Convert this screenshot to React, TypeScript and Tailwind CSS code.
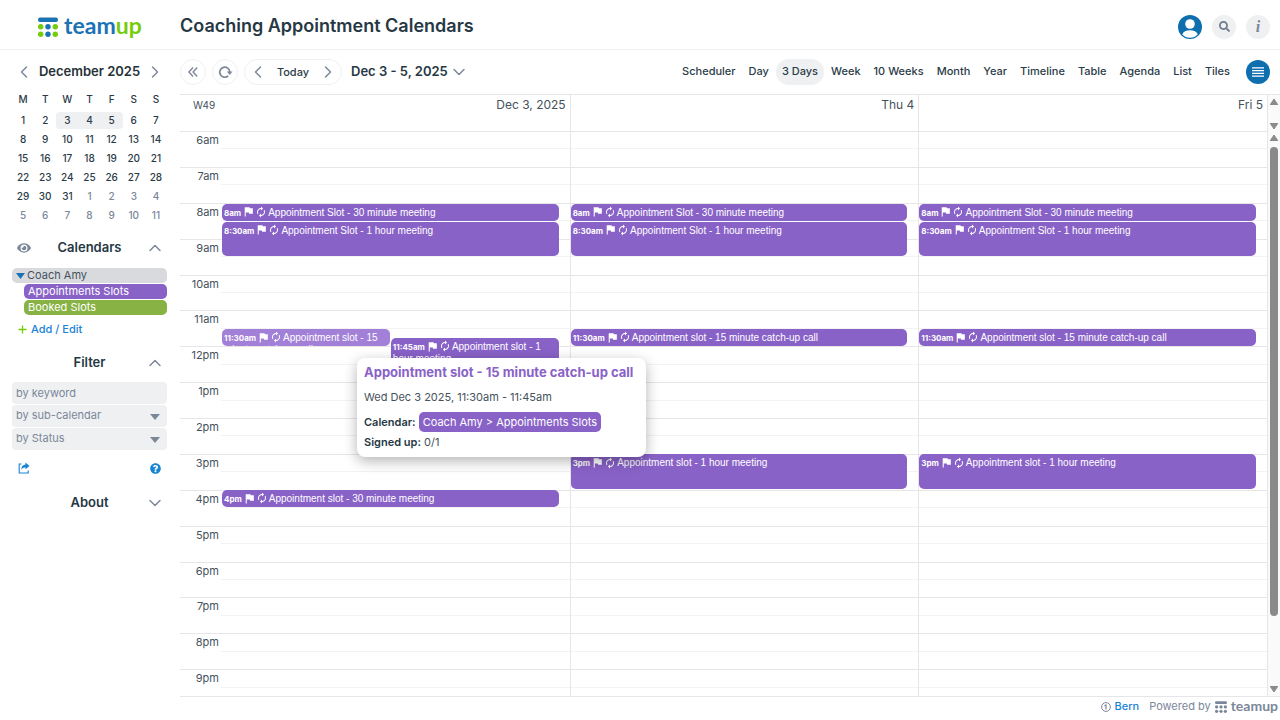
import type { CSSProperties, ReactNode } from "react"
import { clsx } from "clsx"
import { ChevronDown, ChevronLeft, ChevronRight, ChevronUp } from "lucide-react"
import { FaEye, FaQuestionCircle, FaSearch } from "react-icons/fa"
import { MdAutorenew, MdFlag } from "react-icons/md"

const FIRST_HOUR = 6
const HOURS = Array.from({ length: 16 }, (_, i) => FIRST_HOUR + i)

const VIEWS = [
  "Scheduler",
  "Day",
  "3 Days",
  "Week",
  "10 Weeks",
  "Month",
  "Year",
  "Timeline",
  "Table",
  "Agenda",
  "List",
  "Tiles",
]

const WEEKDAYS = ["M", "T", "W", "T", "F", "S", "S"]

interface CalendarEvent {
  time: string
  title: string
  start: number
  /** length in quarter hours, never less than two so that the title fits */
  quarters: number
  lane?: "left" | "right"
  active?: boolean
}

interface Day {
  label: string
  events: CalendarEvent[]
}

const morning: CalendarEvent[] = [
  { time: "8am", title: "Appointment Slot - 30 minute meeting", start: 8, quarters: 2 },
  { time: "8:30am", title: "Appointment Slot - 1 hour meeting", start: 8.5, quarters: 4 },
]

const laterDay: CalendarEvent[] = [
  ...morning,
  { time: "11:30am", title: "Appointment slot - 15 minute catch-up call", start: 11.5, quarters: 2 },
  { time: "3pm", title: "Appointment slot - 1 hour meeting", start: 15, quarters: 4 },
]

const DAYS: Day[] = [
  {
    label: "Dec 3, 2025",
    events: [
      ...morning,
      { time: "11:30am", title: "Appointment slot - 15 minute catch-up call", start: 11.5, quarters: 2, lane: "left", active: true },
      { time: "11:45am", title: "Appointment slot - 1 hour meeting", start: 11.75, quarters: 4, lane: "right" },
      { time: "4pm", title: "Appointment slot - 30 minute meeting", start: 16, quarters: 2 },
    ],
  },
  { label: "Thu 4", events: laterDay },
  { label: "Fri 5", events: laterDay },
]

function formatHour(hour: number) {
  return hour < 12 ? `${hour}am` : `${hour === 12 ? 12 : hour - 12}pm`
}

function LogoMark({ className, dots }: { className: string; dots: [string, string] }) {
  return (
    <svg viewBox="0 0 20 20" className={className} aria-hidden="true">
      <rect x="0" y="0.5" width="20" height="4.6" rx="2" fill={dots[0]} />
      {[9.8, 17.2].map((cy) =>
        [2.7, 10, 17.3].map((cx) => (
          <circle key={`${cx}-${cy}`} cx={cx} cy={cy} r="2.7" fill={cx === 10 ? dots[0] : dots[1]} />
        ))
      )}
    </svg>
  )
}

function Header() {
  return (
    <header className="flex h-[50px] shrink-0 items-center border-b border-[#eeeff1] pr-[10px]">
      <a href="#" className="flex w-[180px] shrink-0 items-center gap-1.5 pt-1 pl-[38px]">
        <LogoMark className="h-5 w-5" dots={["#1a73b4", "#75cc0b"]} />
        <span className="pb-1 font-['Lato','Liberation_Sans',sans-serif] text-[23px] leading-7 font-bold text-[#1a73b4]">
          team<span className="text-[#75cc0b]">up</span>
        </span>
      </a>
      <h1 className="flex-1 pt-0.5 text-[18px] font-semibold text-[#263844]">Coaching Appointment Calendars</h1>
      <div className="flex items-center gap-[10px] pt-1">
        <button type="button" aria-label="Account" className="h-6 w-6">
          <svg viewBox="0 0 24 24" className="h-6 w-6">
            <circle cx="12" cy="12" r="12" fill="#0f6fae" />
            <circle cx="12" cy="9" r="4.8" fill="#fff" />
            <path d="M4.2 19.2c1.2-2.8 4-4 7.8-4s6.6 1.2 7.8 4c-1.9 2.3-4.7 3.6-7.8 3.6s-5.9-1.3-7.8-3.6z" fill="#fff" />
          </svg>
        </button>
        <button type="button" aria-label="Search" className="flex h-6 w-6 items-center justify-center rounded-full bg-[#eff0f2]">
          <FaSearch className="h-[11px] w-[11px] text-[#707b8c]" />
        </button>
        <button
          type="button"
          aria-label="Info"
          className="flex h-6 w-6 items-center justify-center rounded-full bg-[#eff0f2] font-['Liberation_Serif',serif] text-[16px] font-bold text-[#7b8799] italic"
        >
          i
        </button>
      </div>
    </header>
  )
}

function MiniCalendar() {
  // the grid runs from Dec 1 to Jan 11
  const cells = Array.from({ length: 42 }, (_, i) => (i < 31 ? i + 1 : i - 30))
  const weeks = Array.from({ length: 6 }, (_, w) => cells.slice(w * 7, w * 7 + 7))

  return (
    <div>
      <div className="grid h-[39px] grid-cols-[24px_1fr_24px] items-center justify-items-center pt-1 text-[#7b8799]">
        <button type="button" aria-label="Previous month">
          <ChevronLeft className="h-5 w-5" strokeWidth={1.75} />
        </button>
        <h2 className="text-[13px] font-semibold whitespace-nowrap text-[#263238]">December 2025</h2>
        <button type="button" aria-label="Next month">
          <ChevronRight className="h-5 w-5" strokeWidth={1.75} />
        </button>
      </div>
      <table className="w-full table-fixed text-center text-[10px] font-medium text-[#2b3c48]">
        <thead>
          <tr className="h-[22px]">
            {WEEKDAYS.map((day, i) => (
              <th key={i} className="p-0 pb-px font-medium">
                {day}
              </th>
            ))}
          </tr>
        </thead>
        <tbody>
          {weeks.map((week, w) => (
            <tr key={w} className="h-[19px]">
              {week.map((date, i) => {
                const shown = w === 0 && date >= 3 && date <= 5
                return (
                  <td key={i} className={clsx("p-0", w * 7 + i >= 31 && "text-[#7b8799]")}>
                    <span
                      className={clsx(
                        "block leading-[17px]",
                        shown && "bg-[#eff0f2]",
                        shown && date === 3 && "rounded-l",
                        shown && date === 5 && "rounded-r"
                      )}
                    >
                      {date}
                    </span>
                  </td>
                )
              })}
            </tr>
          ))}
        </tbody>
      </table>
    </div>
  )
}

function SectionHeader({ title, className, icon, open = true }: { title: string; className: string; icon?: ReactNode; open?: boolean }) {
  const Chevron = open ? ChevronUp : ChevronDown

  return (
    <div className={clsx("grid grid-cols-[24px_1fr_24px] items-center justify-items-center text-[#7b8799]", className)}>
      <span>{icon}</span>
      <h2 className="text-[13px] font-semibold text-[#263844]">{title}</h2>
      <button type="button" aria-label={`Toggle ${title}`}>
        <Chevron className="h-5 w-5" strokeWidth={1.75} />
      </button>
    </div>
  )
}

function FilterSelect({ label }: { label: string }) {
  return (
    <div className="relative">
      <select aria-label={label} className="block h-[22px] w-full appearance-none rounded bg-[#eff0f2] px-1 pb-0.5 text-[11px] text-[#7b8799]">
        <option>{label}</option>
      </select>
      <svg viewBox="0 0 10 6" className="pointer-events-none absolute top-[9px] right-[7px] h-1.5 w-[10px]">
        <path d="M0 0h10L5 6z" fill="#7b8799" />
      </svg>
    </div>
  )
}

function Sidebar() {
  return (
    <aside className="w-[180px] shrink-0 pr-[13px] pl-3">
      <MiniCalendar />

      <SectionHeader title="Calendars" className="h-[42px] pt-[3px]" icon={<FaEye className="h-[14px] w-[14px]" />} />
      <ul className="flex flex-col gap-px pt-px text-[11px] leading-[15px]">
        <li className="flex items-center gap-0.5 rounded-[5px] bg-[#d9dade] pl-1 text-[#44525c]">
          <svg viewBox="0 0 9 6" className="h-1.5 w-[9px]">
            <path d="M0 0h9L4.5 6z" fill="#1a73b4" />
          </svg>
          Coach Amy
        </li>
        <li className="ml-3 rounded-[5px] bg-[#8962c8] pl-1 text-white">Appointments Slots</li>
        <li className="ml-3 rounded-[5px] bg-[#88b244] pl-1 text-white">Booked Slots</li>
      </ul>
      <a href="#" className="flex h-[29px] items-center gap-1 pl-1.5 text-[11px] font-medium text-[#1784d4]">
        <svg viewBox="0 0 9 9" className="h-[9px] w-[9px]">
          <path d="M4.5 0.5v8M0.5 4.5h8" stroke="#75cc0b" strokeWidth="1.3" />
        </svg>
        Add / Edit
      </a>

      <SectionHeader title="Filter" className="h-[38px]" />
      <div className="flex flex-col gap-px">
        <input
          type="text"
          aria-label="Keyword"
          placeholder="by keyword"
          className="h-[22px] w-full rounded bg-[#eff0f2] px-1 pb-px text-[11px] placeholder:text-[#7b8799]"
        />
        <FilterSelect label="by sub-calendar" />
        <FilterSelect label="by Status" />
      </div>
      <div className="flex h-9 items-center justify-between px-[6px] text-[#1784d4]">
        <button type="button" aria-label="Share">
          <svg viewBox="0 0 12 12" className="h-3 w-3" fill="none">
            <path d="M3.5 2H1.2v9h9V8.5" stroke="currentColor" strokeWidth="1.1" />
            <path d="M7.5 0.5L11.5 4 7.5 7.3V5.4C5.5 5.4 4.3 6 3.3 7.8 3.3 4.6 4.8 2.6 7.5 2.4z" fill="currentColor" />
          </svg>
        </button>
        <button type="button" aria-label="Help">
          <FaQuestionCircle className="h-[11px] w-[11px]" />
        </button>
      </div>

      <SectionHeader title="About" className="h-[34px]" open={false} />
    </aside>
  )
}

function Toolbar() {
  const round = "flex h-[26px] w-[26px] items-center justify-center rounded-full border border-[#eff0f4]"

  return (
    <div className="flex h-[44px] shrink-0 items-center pr-[10px] text-[#7b8799]">
      <div className="flex items-center gap-1.5">
        <button type="button" aria-label="Collapse sidebar" className={round}>
          <svg viewBox="0 0 10 10" className="h-[10px] w-[10px]" fill="none" stroke="currentColor" strokeWidth="1.4">
            <path d="M5 0.5L0.9 5 5 9.5M9.2 0.5L5.1 5l4.1 4.5" />
          </svg>
        </button>
        <button type="button" aria-label="Refresh" className={round}>
          <svg viewBox="0 0 14 14" className="h-4 w-4" fill="none">
            <path d="M9.8 10.4A4.4 4.4 0 1 1 11.2 7" stroke="currentColor" strokeWidth="1.5" />
            <path d="M8.6 6.6h5L11.1 9.6z" fill="currentColor" />
          </svg>
        </button>
        <div className="flex h-[26px] items-center rounded-full border border-[#eff0f4] text-[11px] font-medium text-[#2b3c48]">
          <button type="button" aria-label="Previous" className="flex w-[26px] justify-center text-[#7b8799]">
            <ChevronLeft className="h-5 w-5" strokeWidth={1.75} />
          </button>
          <button type="button" className="w-[44px]">
            Today
          </button>
          <button type="button" aria-label="Next" className="flex w-[26px] justify-center text-[#7b8799]">
            <ChevronRight className="h-5 w-5" strokeWidth={1.75} />
          </button>
        </div>
      </div>
      <button type="button" className="ml-[9px] flex items-center gap-px text-[#7b8799]">
        <span className="text-[13px] font-semibold whitespace-nowrap text-[#263844]">Dec 3 - 5, 2025</span>
        <ChevronDown className="h-5 w-5" strokeWidth={1.75} />
      </button>

      <nav className="ml-auto flex items-center gap-px text-[11px] font-medium text-[#2b3c48]">
        {VIEWS.map((view) => (
          <button
            key={view}
            type="button"
            className={clsx("h-[26px] rounded-full px-1.5 pb-px whitespace-nowrap", view === "3 Days" && "bg-[#eff0f2]")}
          >
            {view}
          </button>
        ))}
      </nav>
      <button type="button" aria-label="Menu" className="ml-[10px] flex h-6 w-6 shrink-0 items-center justify-center rounded-full bg-[#0f6fae]">
        <svg viewBox="0 0 12 10" className="h-[10px] w-3">
          <path d="M0 .8h12M0 3.6h12M0 6.4h12M0 9.2h12" stroke="#fff" strokeWidth="1.2" />
        </svg>
      </button>
    </div>
  )
}

function EventCard({ event }: { event: CalendarEvent }) {
  const row = (event.start - FIRST_HOUR) * 4 + 1
  const style: CSSProperties = { gridRow: `${row} / span ${event.quarters}` }

  return (
    <button
      type="button"
      style={style}
      className={clsx(
        "mb-px flex min-h-0 items-start overflow-hidden rounded-[5px] px-0.5 pt-[3px] text-left font-['Liberation_Sans',Arial,sans-serif] text-[10px] leading-3 text-white",
        event.active ? "bg-[#a280d8]" : "bg-[#8962c8]",
        event.lane === "left" && "col-start-1",
        event.lane === "right" && "col-start-2",
        !event.lane && "col-span-2 col-start-1"
      )}
    >
      <span>
        <b className="font-['Inter',sans-serif] text-[8px] leading-none font-bold">{event.time}</b>
        <MdFlag className="-mt-[5px] -mb-[3px] ml-px inline h-[13px] w-[13px]" />
        <MdAutorenew className="-mt-[5px] mr-px -mb-[3px] inline h-3 w-3" />
        {event.title}
      </span>
    </button>
  )
}

function EventPopup() {
  return (
    <div
      role="tooltip"
      className="absolute top-[227px] left-[135px] z-20 w-[289px] rounded-lg bg-white px-[7px] pt-1 pb-[5px] text-[11px] leading-5 text-[#44525c] shadow-[0_4px_14px_rgba(0,0,0,0.3)]"
    >
      <h3 className="text-[13px] font-bold whitespace-nowrap text-[#8962c8]">Appointment slot - 15 minute catch-up call</h3>
      <p className="py-[5px]">Wed Dec 3 2025, 11:30am - 11:45am</p>
      <p>
        <b className="font-semibold text-[#263844]">Calendar:</b>{" "}
        <span className="inline-block rounded-[5px] bg-[#8962c8] px-1 text-white">Coach Amy &gt; Appointments Slots</span>
      </p>
      <p>
        <b className="font-semibold text-[#263844]">Signed up:</b> 0/1
      </p>
    </div>
  )
}

function Arrow({ down = false }: { down?: boolean }) {
  return (
    <svg viewBox="0 0 8 6" className="h-1.5 w-2 shrink-0">
      <path d={down ? "M0 0h8L4 6z" : "M0 6h8L4 0z"} fill="#8a8a8a" stroke="#8a8a8a" strokeLinejoin="round" />
    </svg>
  )
}

function CalendarGrid() {
  return (
    <div className="flex min-h-0 flex-1 flex-col border-y border-[#e6e6e8]">
      <div className="flex h-9 shrink-0 text-[12px] leading-5 text-[#44525c]">
        <div className="w-[41px] shrink-0 pl-[7px] text-center text-[10px]">W49</div>
        <div className="grid flex-1 grid-cols-3">
          {DAYS.map((day, i) => (
            <div key={day.label} className={clsx("pr-1 text-right", i > 0 && "border-l border-[#e6e6e8]")}>
              {day.label}
            </div>
          ))}
        </div>
        <div className="flex w-[13px] shrink-0 flex-col items-center justify-between border-l border-[#e6e6e8] bg-[#fafafa] pt-1 pb-0.5">
          <Arrow />
          <Arrow down />
        </div>
      </div>

      <div className="flex min-h-0 flex-1">
        <div className="relative grid h-full flex-1 grid-rows-[574px] overflow-hidden">
          <div className="col-start-1 row-start-1 grid grid-rows-[repeat(16,1fr)]">
            {HOURS.map((hour) => (
              <div key={hour} className="flex min-h-0 border-t border-[#e6e6e8]">
                <div className="w-[41px] shrink-0 pr-0.5 text-right text-[11px] leading-4 text-[#44525c]">{formatHour(hour)}</div>
                <div className="h-1/2 flex-1 border-b border-[#f3f3f4]" />
              </div>
            ))}
          </div>
          <div className="col-start-1 row-start-1 grid grid-cols-3 pl-[41px]">
            {DAYS.map((day, i) => (
              <div
                key={day.label}
                className={clsx(
                  "relative grid min-h-0 grid-cols-2 grid-rows-[repeat(64,minmax(0,1fr))] gap-x-px border-l pt-px pr-[11px]",
                  i > 0 ? "border-[#e6e6e8]" : "border-transparent"
                )}
              >
                {day.events.map((event) => (
                  <EventCard key={event.time} event={event} />
                ))}
                {i === 0 && <EventPopup />}
              </div>
            ))}
          </div>
        </div>
        <div className="flex w-[13px] shrink-0 flex-col items-center border-l border-[#e6e6e8] bg-[#fafafa] py-1">
          <Arrow />
          <div className="w-full flex-1 px-0.5 pt-1.5">
            <div className="h-[87%] rounded-full bg-[#8a8a8a]" />
          </div>
          <Arrow down />
        </div>
      </div>
    </div>
  )
}

function Footer() {
  return (
    <footer className="flex h-[23px] shrink-0 items-center justify-end gap-[10px] pr-0.5 pb-1 text-[11px] text-[#7b8799]">
      <a href="#" className="flex items-center gap-1 font-medium text-[#1784d4]">
        <svg viewBox="0 0 10 10" className="h-[10px] w-[10px]" fill="none" stroke="#7b8799">
          <circle cx="5" cy="5" r="4.4" />
          <path d="M3.4 3.6L5 3v4.5" strokeWidth="1.2" />
        </svg>
        Bern
      </a>
      <div className="flex items-center gap-1">
        Powered by
        <a href="#" className="flex items-center gap-1">
          <LogoMark className="h-3 w-3" dots={["#7b8799", "#7b8799"]} />
          <span className="pb-0.5 font-['Lato','Liberation_Sans',sans-serif] text-[14px] leading-5 font-bold">teamup</span>
        </a>
      </div>
    </footer>
  )
}

export default function App() {
  return (
    <div className="flex h-screen flex-col overflow-hidden bg-white font-['Inter','Liberation_Sans',sans-serif]">
      <Header />
      <div className="flex min-h-0 flex-1">
        <Sidebar />
        <main className="flex min-w-0 flex-1 flex-col">
          <Toolbar />
          <CalendarGrid />
          <Footer />
        </main>
      </div>
    </div>
  )
}
